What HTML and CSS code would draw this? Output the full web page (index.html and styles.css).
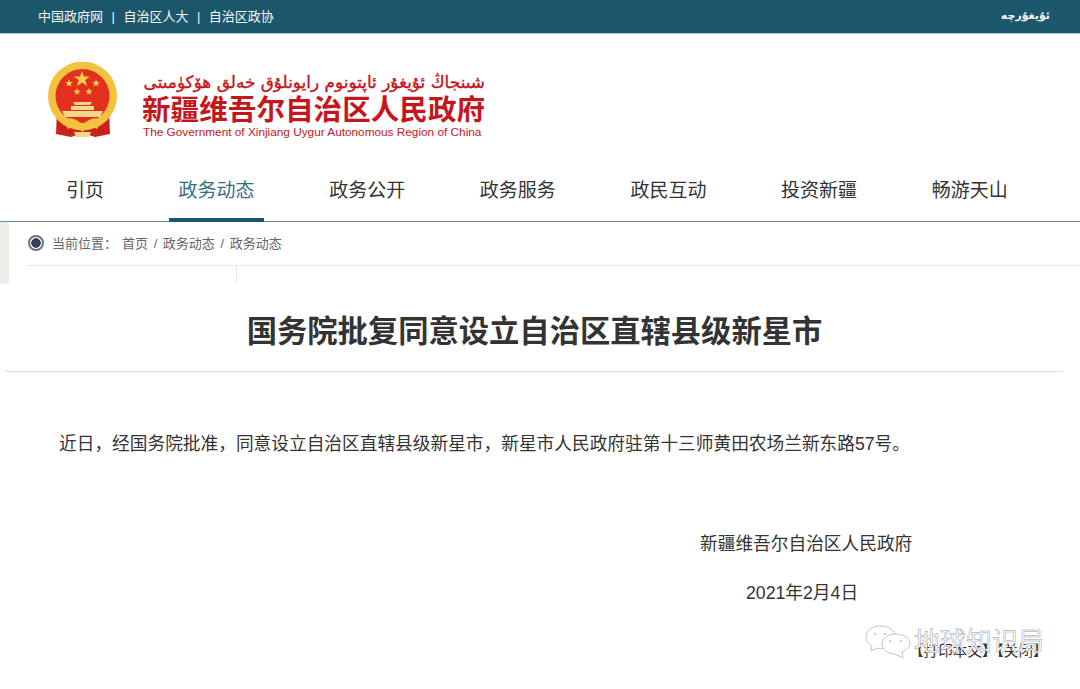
FILE: index.html
```html
<!DOCTYPE html>
<html lang="zh-CN">
<head>
  <meta charset="UTF-8">
  <meta name="viewport" content="width=device-width, initial-scale=1.0">
  <title>新疆维吾尔自治区人民政府</title>
  <link rel="stylesheet" href="styles.css">
</head>
<body>
  <div class="topbar">
    <div class="top-links">
      <a>中国政府网</a><span class="sep">|</span><a>自治区人大</a><span class="sep">|</span><a>自治区政协</a>
    </div>
    <a class="lang" lang="ug" dir="rtl">ئۇيغۇرچە</a>
  </div>

  <div class="header">
    <svg class="emblem" width="72" height="76" viewBox="0 0 72 76">
      <path d="M10 48 L9 72 L24 75 L36 71 L48 75 L63 72 L62 48 Z" fill="#c9221c"/>
      <circle cx="35.500" cy="34" r="34.500" fill="#f3c240"/>
      <circle cx="35.500" cy="34" r="27" fill="#e2301f"/>
      <polygon points="35,9 37,14.500 43,14.500 38.200,18 40,24 35,20.400 30,24 31.800,18 27,14.500 33,14.500" fill="#f6cf4d"/>
      <polygon points="22,17 23,20 26,20 23.600,21.800 24.500,24.600 22,23 19.500,24.600 20.400,21.800 18,20 21,20" fill="#f6cf4d"/>
      <polygon points="49,17 50,20 53,20 50.600,21.800 51.500,24.600 49,23 46.500,24.600 47.400,21.800 45,20 48,20" fill="#f6cf4d"/>
      <polygon points="30,26 31,28.600 33.600,28.600 31.500,30.200 32.300,32.800 30,31.200 27.700,32.800 28.500,30.200 26.400,28.600 29,28.600" fill="#f6cf4d"/>
      <polygon points="42,26 43,28.600 45.600,28.600 43.500,30.200 44.300,32.800 42,31.200 39.700,32.800 40.500,30.200 38.400,28.600 41,28.600" fill="#f6cf4d"/>
      <path d="M26 40 H45 L43 43 H28 Z M24 44 H47 V48 H24 Z M15 49 H56 L53 55 H18 Z" fill="#f5d78a"/>
      <path d="M16 58 Q26 53 35.500 63 Q45 53 55 58 L50 67 Q42 62 35.500 70 Q29 62 21 67 Z" fill="#f3c240"/>
      <path d="M27 70 H44 L42 75 H29 Z" fill="#f5d78a"/>
    </svg>
    <div class="brand">
      <div class="brand-ug" lang="ug" dir="rtl">شىنجاڭ ئۇيغۇر ئاپتونوم رايونلۇق خەلق ھۆكۈمىتى</div>
      <div class="brand-cn">新疆维吾尔自治区人民政府</div>
      <div class="brand-en">The Government of Xinjiang Uygur Autonomous Region of China</div>
    </div>
  </div>

  <div class="nav">
    <a class="nav-item">引页</a>
    <a class="nav-item active">政务动态</a>
    <a class="nav-item">政务公开</a>
    <a class="nav-item">政务服务</a>
    <a class="nav-item">政民互动</a>
    <a class="nav-item">投资新疆</a>
    <a class="nav-item">畅游天山</a>
  </div>

  <div class="crumb-row">
    <div class="strip"></div>
    <div class="crumb-main">
      <div class="crumb">
        <span class="radio"></span>
        <span class="crumb-label">当前位置：</span>
        <span class="crumb-path">首页 / 政务动态 / 政务动态</span>
      </div>
      <div class="crumb-tick"></div>
    </div>
  </div>

  <div class="article">
    <h1 class="title">国务院批复同意设立自治区直辖县级新星市</h1>
    <p class="body-text">近日，经国务院批准，同意设立自治区直辖县级新星市，新星市人民政府驻第十三师黄田农场兰新东路57号。</p>
    <div class="sign">
      <p class="sign-org">新疆维吾尔自治区人民政府</p>
      <p class="sign-date">2021年2月4日</p>
    </div>
    <div class="tools">【打印本文】【关闭】</div>
  </div>

  <!-- 水印 -->
  <div class="watermark">
    <svg width="46" height="34" viewBox="0 0 46 34" fill="#fff" stroke="#c4c4c4" stroke-width="1">
      <path d="M15 1 C7 1 1 6 1 12 C1 16 3 19 7 21 L6 26 L12 23 C14 23.500 16 24 18 23 C24 23 28 12 30 9 C28 4 22 1 15 1 Z"/>
      <path d="M30 9 C22 9 17 14 17 19 C17 25 23 29 30 29 L38 33 L37 27 C41 25 45 23 45 18 C45 13 38 9 30 9 Z"/>
      <circle cx="10" cy="9" r="1" fill="#bbb" stroke="none"/>
      <circle cx="20" cy="9" r="1" fill="#bbb" stroke="none"/>
      <circle cx="25" cy="16" r="1" fill="#bbb" stroke="none"/>
      <circle cx="36" cy="16" r="1" fill="#bbb" stroke="none"/>
    </svg>
    <span>地球知识局</span>
  </div>
</body>
</html>
```

FILE: styles.css
```css
body {
  font-family: "Liberation Sans", "Noto Sans CJK SC", sans-serif;
  margin: 0;
  padding: 0;
  color: #333;
  background: #fff;
  position: relative;
  height: 689px;
  overflow: hidden;
}

.topbar {
  display: flex;
  justify-content: space-between;
  align-items: center;
  height: 31px;
  padding: 0 30px 2px 38px;
  background: #1c566b;
  border-bottom: 1px solid #a9d3dc;
  color: #f4f8f9;
  font-size: 13px;
}
.sep {
  margin: 0 8.5px;
}
.lang {
  font-family: "DejaVu Sans", sans-serif;
  font-size: 11px;
  font-weight: bold;
}

.header {
  display: flex;
  align-items: flex-start;
  height: 126px;
  padding: 28px 0 0 47px;
  box-sizing: border-box;
}
.brand {
  margin-left: 23px;
  width: 343px;
  color: #c5161d;
}
.brand-ug {
  font-family: "DejaVu Sans", sans-serif;
  font-size: 16.9px;
  -webkit-text-stroke: 0.4px #c5161d;
  line-height: 32px;
  height: 32px;
  white-space: nowrap;
  margin-top: 4px;
}
.brand-cn {
  font-size: 28.6px;
  font-weight: bold;
  line-height: 30px;
  margin-top: -3px;
  white-space: nowrap;
}
.brand-en {
  font-size: 11.8px;
  line-height: 18px;
  margin-top: -2px;
  padding-left: 1px;
  white-space: nowrap;
}

.nav {
  display: flex;
  gap: 55.6px;
  height: 62px;
  padding-left: 56.5px;
  border-bottom: 1px solid #6d8f99;
  box-sizing: border-box;
}
.nav-item {
  padding: 0 9.5px;
  font-size: 19px;
  line-height: 62px;
  height: 62px;
  box-sizing: border-box;
}
.nav-item.active {
  color: #34707f;
  border-bottom: 4px solid #1c566b;
}

.crumb-row {
  display: flex;
  height: 62px;
}
.strip {
  width: 9px;
  background: #eeedea;
}
.crumb-main {
  flex: 1;
  padding-left: 18px;
}
.crumb {
  display: flex;
  align-items: center;
  height: 41px;
  padding-bottom: 2px;
  font-size: 13px;
  color: #666;
  border-bottom: 1px solid #e8e8e8;
}
.radio {
  width: 16px;
  height: 16px;
  margin-left: 1px;
  border: 2px solid #6a7283;
  border-radius: 50%;
  box-sizing: border-box;
  background: radial-gradient(circle, #34405a 4.5px, #fff 5px);
}
.crumb-label {
  margin: 0 5px 0 8px;
}
.crumb-path {
  word-spacing: 2px;
}
.crumb-tick {
  width: 209px;
  height: 18px;
  border-right: 1px solid #e8e8e8;
}

.article {
  padding: 0 17px 0 5px;
}
.title {
  margin: 0;
  height: 87px;
  line-height: 96px;
  font-size: 30.3px;
  font-weight: bold;
  text-align: center;
  padding-left: 1px;
  border-bottom: 1px solid #ddd;
  color: #333;
}
.body-text {
  margin: 59px 0 0 54px;
  font-size: 17.7px;
  line-height: 26px;
  white-space: nowrap;
}
.sign {
  margin: 74px 0 0 695px;
  font-size: 17.7px;
}
.sign p {
  margin: 0;
  line-height: 26px;
}
.sign .sign-date {
  margin-top: 23px;
  padding-left: 46px;
}
.tools {
  margin: 35px 0 0 904px;
  font-size: 14.6px;
  line-height: 20px;
  white-space: nowrap;
  color: #333;
}

.watermark {
  position: absolute;
  left: 865px;
  top: 625px;
  display: flex;
  align-items: center;
  gap: 3px;
  font-size: 26px;
  line-height: 32px;
  color: #fff;
  -webkit-text-stroke: 0.5px #999;
  white-space: nowrap;
}
```
